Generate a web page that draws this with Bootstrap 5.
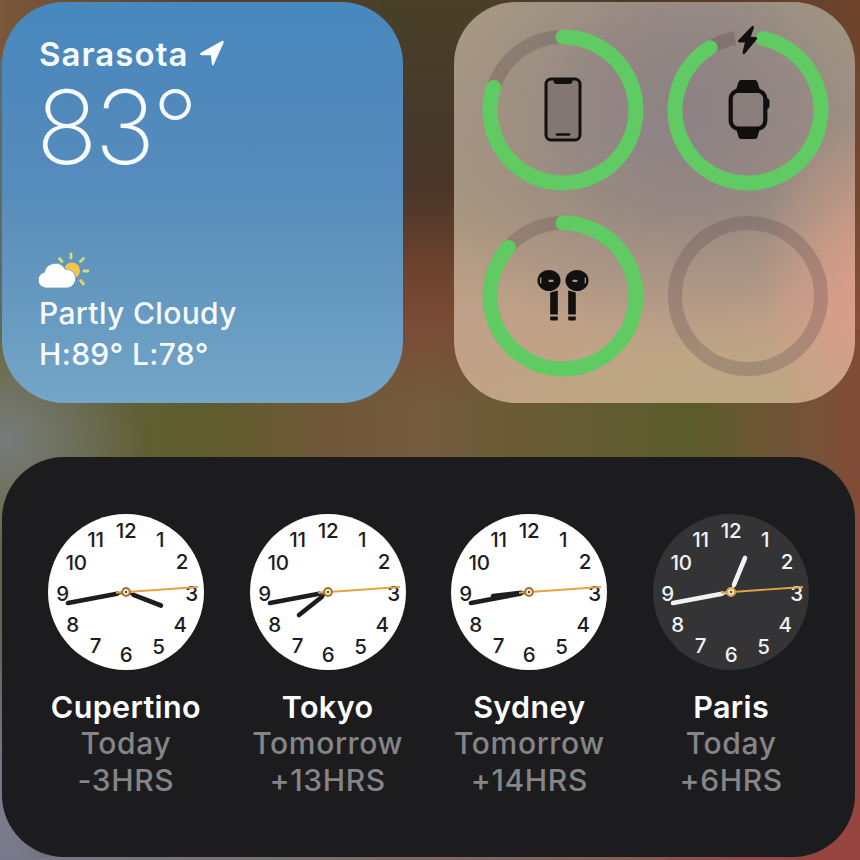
<!DOCTYPE html>
<html lang="en">
<head>
<meta charset="utf-8">
<title>Widgets</title>
<meta name="viewport" content="width=device-width, initial-scale=1">
<link rel="stylesheet" href="https://cdn.jsdelivr.net/npm/bootstrap@5.3.0/dist/css/bootstrap.min.css">
<style>
body{
  width:860px;height:860px;
  font-family:Inter,"Liberation Sans",sans-serif;
  background:
    linear-gradient(90deg,#77788a 0,#77706e 300px,#85605a 600px,#964440 800px) 0 857px/860px 3px no-repeat,
    radial-gradient(ellipse 150px 110px at 0 440px,#777b7c 0,#777b7c99 40%,#777b7c00 100%),
    radial-gradient(ellipse 60px 200px at 0 860px,#7a7a8c 20%,#7a7a8c00 100%),
    radial-gradient(ellipse 60px 200px at 860px 860px,#964440 30%,#96444000 100%),
    linear-gradient(180deg,#4a4028 0,#46382a 130px,#4a3628 190px,#6d432f 270px,#7a4a34 320px,#7a4a3400 404px) 380px 0/100px 404px no-repeat,
    linear-gradient(90deg,#68693c 0,#5f6034 110px,#5f5c2c 210px,#6f5738 330px,#755c3d 425px,#695b36 520px,#5b5c2d 690px,#765138 810px,#804b36 860px) 0 330px/860px 145px no-repeat,
    linear-gradient(90deg,#7c573a 0,#574029 200px,#4a4028 430px,#4d3a28 640px,#6e452c 860px) 0 0/860px 60px no-repeat,
    linear-gradient(180deg,#6e452c 0,#74492f 200px,#87503a 320px,#804b36 400px,#804b36 475px,#7c5040 600px,#964440 860px) 780px 0/80px 860px no-repeat,
    linear-gradient(180deg,#5f6a68 0,#5f6a68 300px,#68693c 475px,#5c6650 600px,#6e7078 860px);
}
.board{padding:2px 5px 3px 2px;row-gap:54px}
.tile{border-radius:62px;border:0}
.tile-sm{width:401px;height:401px}
.tile-lg{height:400px}
.weather{
  padding:33px 38px 28px;color:#f6fbff;
  background:linear-gradient(180deg,#4788bf 0,#5089bb 25%,#568cbd 47%,#5c91b9 57%,#6699c0 75%,#74a6c8 100%);
}
.place{font-size:33px;line-height:38px;font-weight:600;letter-spacing:1.050px;margin-left:-1px}
.temp{font-size:102px;line-height:108px;font-weight:200;letter-spacing:-2.800px;margin-left:-4px}
.cond{font-size:30px;line-height:41px;font-weight:500;letter-spacing:.350px;margin-left:-1px}
.sky{margin:0 0 4px -3px}
.batteries{
  padding:27px 26px 0 28px;
  background:
    radial-gradient(ellipse 110px 180px at 103% 73%,#dd9d8a 0,#dd9d8a99 40%,#dd9d8a00 100%),
    radial-gradient(ellipse 270px 250px at 58% 26%,#8d8184 0,#8d8184cc 30%,#8d818455 65%,#8d818400 100%),
    radial-gradient(ellipse 260px 110px at 62% 100%,#bda883 0,#bda88399 45%,#bda88300 100%),
    linear-gradient(180deg,#aa9c82 0,#a69681 35%,#a8977f 52%,#c0a088 78%,#c2a386 100%);
}
.batteries svg{width:162px;height:162px;overflow:visible}
.ring-grid{display:grid;grid-template-columns:162px 162px;gap:24px 23px}
.clocks{background:#1c1c1e;padding:55px 23px 0}
.city{width:202px}
.city svg{width:160px;height:160px}
.city-name{font-size:30.500px;line-height:37px;font-weight:600;color:#fff;margin-top:16px;letter-spacing:.350px}
.city-sub{font-size:30px;line-height:37px;font-weight:500;color:#858588;letter-spacing:.650px}
.num{font:500 20.500px Inter,sans-serif;text-anchor:middle;letter-spacing:-.3px}
</style>
</head>
<body class="overflow-hidden m-0">
<main class="board d-flex flex-column">
  <div class="d-flex justify-content-between">
    <section class="tile tile-sm weather card d-flex flex-column">
      <div class="place d-flex align-items-center">Sarasota
        <svg style="margin-left:8px" width="29" height="28" viewBox="0 0 29 28"><path d="M4.200 12.600 24.500 1.200Q27.500 0 26.500 3L16.800 24.500q-1.600 2.200-2-.6L14 15.300 4.800 15.200Q1.800 14.600 4.200 12.600Z" fill="#fff"/></svg>
      </div>
      <div class="temp">83°</div>
      <div class="mt-auto">
        <svg class="sky d-block" width="54" height="38" viewBox="0 0 54 38">
          <g stroke="#d0dc84" stroke-width="2.800" stroke-linecap="round"><path d="M34 3v4M22.500 7.500l2.500 3M46.500 7.500l-3 3M51 20h-4"/><path d="M46.500 33l-3-3.500" stroke="#e7d45e"/></g>
          <circle cx="35" cy="19.500" r="8" fill="#f6c548"/>
          <path d="M9 37a8 8 0 0 1-1.500-15.800 11 11 0 0 1 20.500-3 9 9 0 0 1 2.500 18.800Z" fill="#fff" stroke="#6599be" stroke-width=".8"/>
        </svg>
        <div class="cond">Partly Cloudy</div>
        <div class="cond">H:89° L:78°</div>
      </div>
    </section>

    <section class="tile tile-sm batteries card">
      <div class="ring-grid">
        <svg viewBox="-81 -81 162 162" fill="none">
          <circle r="73" stroke="#63504f" stroke-opacity=".32" stroke-width="14"/>
          <path d="M0-73A73 73 0 1 1-69.400-22.600" stroke="#60cb62" stroke-width="15" stroke-linecap="round"/>
          <rect x="-17" y="-31" width="34" height="61" rx="5" fill="#827771" stroke="#12100e" stroke-width="3"/>
          <path d="M-9.500-31h19v1.500q0 3.500-3.500 3.500h-12q-3.500 0-3.500-3.500Z" fill="#12100e"/>
          <path d="M-6 24.500H6" stroke="#12100e" stroke-width="2.600" stroke-linecap="round"/>
        </svg>
        <svg viewBox="-81 -81 162 162" fill="none">
          <path d="M-38-62.300A73 73 0 0 1-13-71.800" stroke="#63504f" stroke-opacity=".36" stroke-width="14"/>
          <path d="M15-71.400A73 73 0 1 1-38-62.300" stroke="#60cb62" stroke-width="15" stroke-linecap="round"/>
          <path d="M4-83.500-9.500-69.500Q-10-68 -8.500-68H-2.500L-5-57.500q0 2 1.500 1L8.500-71q1-1.500-1-1.600H2L5.500-82.500Q5.500-84.500 4-83.500Z" fill="#12100e" stroke="#12100e"/>
          <path d="M-12-20-9.500-28q.7-2 2.500-2H7q1.800 0 2.500 2L12-20ZM-12 18-9.500 27q.7 2 2.500 2H7q1.800 0 2.500-2L12 18Z" fill="#12100e"/>
          <rect x="-17.300" y="-19.500" width="34.600" height="38.500" rx="8.500" fill="#8a7e7c" stroke="#12100e" stroke-width="4.200"/>
          <path d="M-12-20.500H12V-17H-12ZM-12 16.500H12V20H-12Z" fill="#12100e"/>
          <path d="M18-12q3.500 0 3.500 3.500v4q0 3.500-3.500 3.500Z" fill="#12100e"/>
        </svg>
        <svg viewBox="-81 -81 162 162" fill="none">
          <circle r="73" stroke="#63504f" stroke-opacity=".3" stroke-width="14"/>
          <path d="M0-73A73 73 0 1 1-54.500-48.600" stroke="#60cb62" stroke-width="15" stroke-linecap="round"/>
          <g id="bud">
            <ellipse cx="-14" cy="-15.500" rx="11.500" ry="10.500" fill="#12100e"/>
            <path d="M-12.800-3.500-5.200-5.500V18.500h-7.600ZM-12.800 20.500h7.600V23q0 1.500-1.500 1.500h-4.600q-1.500 0-1.500-1.500Z" fill="#12100e"/>
            <path d="M-22.300-18.500v6" stroke="#a8988a" stroke-width="1.300"/>
            <path d="M-13.500-15.200h3" stroke="#a8988a" stroke-width="2.200" stroke-linecap="round"/>
          </g>
          <use href="#bud" transform="scale(-1 1)"/>
        </svg>
        <svg viewBox="-81 -81 162 162" fill="none">
          <circle r="73" stroke="#63504f" stroke-opacity=".3" stroke-width="14"/>
        </svg>
      </div>
    </section>
  </div>

  <section class="tile tile-lg clocks card">
    <div class="d-flex justify-content-between" id="cities"></div>
  </section>
</main>
<script src="https://cdn.jsdelivr.net/npm/bootstrap@5.3.0/dist/js/bootstrap.bundle.min.js"></script>
<script>
// hour: tip of the hour hand relative to the dial centre
const cities = [
  {name:'Cupertino', day:'Today',    diff:'-3HRS',  hour:[35,13.5]},
  {name:'Tokyo',     day:'Tomorrow', diff:'+13HRS', hour:[-29,23]},
  {name:'Sydney',    day:'Tomorrow', diff:'+14HRS', hour:[-36,4]},
  {name:'Paris',     day:'Today',    diff:'+6HRS',  hour:[14,-34], night:true}
];
const spots = [[34,-53],[56,-31],[65.5,1],[54,32],[32.5,54],[0,62.5],[-30.5,53],[-53.5,32],[-63.5,1],[-50,-30],[-30.5,-53],[0,-62]];
document.getElementById('cities').innerHTML = cities.map(c => {
  const ink = c.night ? '#f2f2f4' : '#1d1d1f', face = c.night ? '#343436' : '#fff';
  const nums = spots.map((p,i) => `<text class="num" x="${p[0]}" y="${p[1]+7.5}" fill="${ink}">${i+1}</text>`).join('');
  const [hx,hy] = c.hour, len = Math.hypot(hx,hy);
  return `<div class="city d-flex flex-column align-items-center text-center">
    <svg viewBox="-80 -80 160 160"><circle r="78" fill="${face}"/>${nums}
      <g stroke="${ink}" stroke-linecap="round">
        <path d="M0 0L${hx} ${hy}" stroke-width="2.4"/>
        <path d="M${hx/len*8} ${hy/len*8}L${hx} ${hy}" stroke-width="4.6"/>
        <path d="M0 0L-58 11" stroke-width="2.4"/>
        <path d="M-9 1.7L-58 11" stroke-width="4.6"/></g>
      <path d="M-10 .8L72-5" stroke="#e5a243" stroke-width="1.9"/>
      <circle r="3.8" fill="${c.night ? '#fff3d8' : '#fff'}" stroke="${c.night ? '#d9a95c' : '#a9782e'}" stroke-width="2.2"/><circle r="1.3" fill="#5d4828"/>
    </svg>
    <div class="city-name">${c.name}</div><div class="city-sub">${c.day}</div><div class="city-sub">${c.diff}</div>
  </div>`;
}).join('');
</script>
</body>
</html>
